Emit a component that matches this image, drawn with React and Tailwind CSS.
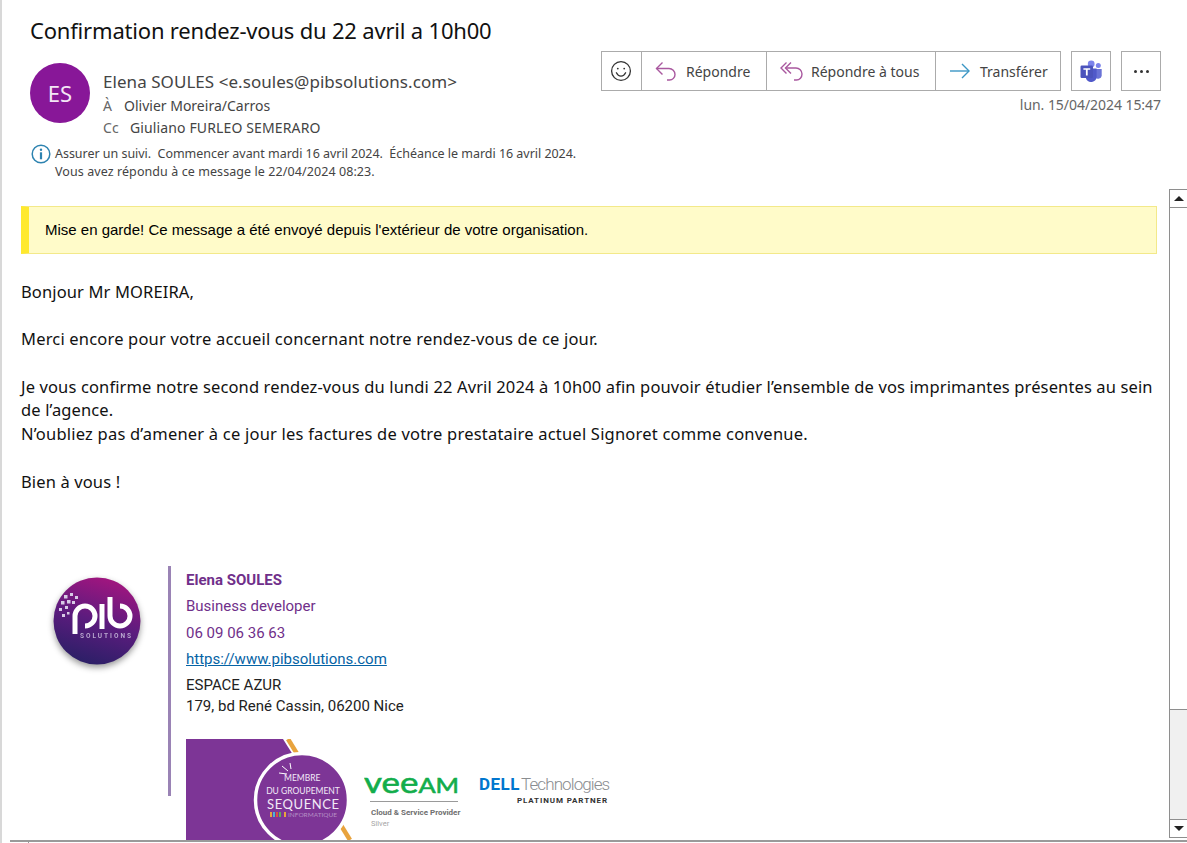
import React from "react";

const SmileIcon = () => (
  <svg width="22" height="22" viewBox="0 0 22 22" fill="none" stroke="#333" strokeWidth="1.3">
    <circle cx="11" cy="11" r="9.4" />
    <circle cx="7.8" cy="8.6" r="0.9" fill="#333" stroke="none" />
    <circle cx="14.2" cy="8.6" r="0.9" fill="#333" stroke="none" />
    <path d="M6.4 12.8c1 2.2 2.7 3.3 4.6 3.3s3.6-1.1 4.600-3.3" strokeLinecap="round" />
  </svg>
);

const ReplyIcon = () => (
  <svg width="22" height="22" viewBox="0 0 22 22" fill="none" stroke="#a9589f" strokeWidth="1.4">
    <path d="M7.5 2.500 1.500 8.500l6 6" />
    <path d="M1.500 8.500H14a6 6 0 0 1 6 6c0 3-2.300 5.500-5.500 5.500H12" />
  </svg>
);

const ReplyAllIcon = () => (
  <svg width="24" height="22" viewBox="0 0 24 22" fill="none" stroke="#a9589f" strokeWidth="1.4">
    <path d="M6.500 2.500 1 8l5.500 5.500" />
    <path d="M11 2.500 5.500 8l5.500 5.500" />
    <path d="M5.500 8H16a6 6 0 0 1 6 6c0 3.200-2.300 6-5.500 6H14" />
  </svg>
);

const ForwardIcon = () => (
  <svg width="22" height="18" viewBox="0 0 22 18" fill="none" stroke="#3a96c4" strokeWidth="1.4">
    <path d="M1 9h19" />
    <path d="M13 2l7 7-7 7" />
  </svg>
);

const TeamsIcon = () => (
  <svg width="24" height="24" viewBox="0 0 24 24">
    <circle cx="19.300" cy="6.600" r="2.500" fill="#7b83eb" />
    <path d="M15.500 10h7.200v6.200a3.700 3.700 0 0 1-7.200 1z" fill="#6a73d6" />
    <circle cx="12.200" cy="5" r="3.400" fill="#7b83eb" />
    <path d="M7 9.500h10.600v8.300a5.500 5.500 0 0 1-10.600 1.700z" fill="#5059c9" />
    <rect x="1.500" y="6.500" width="12.500" height="12.500" rx="1.200" fill="#4b53bc" />
    <path d="M4.400 9.300h6.800v1.500H8.700v5.600H6.900v-5.600H4.400z" fill="#fff" />
  </svg>
);

const PibLogo = () => (
  <svg width="96" height="100" viewBox="0 0 96 100" className="drop-shadow-[0_3px_3px_rgba(0,0,0,0.4)]">
    <defs>
      <linearGradient id="pibBg" x1="0.65" y1="0" x2="0.35" y2="1">
        <stop offset="0" stopColor="#a3157f" />
        <stop offset="0.5" stopColor="#5c1c7e" />
        <stop offset="1" stopColor="#2a1f66" />
      </linearGradient>
    </defs>
    <circle cx="47" cy="50" r="43.500" fill="url(#pibBg)" />
    <path d="M25 63V45a10 10 0 1 1 10 10" fill="none" stroke="#fff" strokeWidth="5" />
    <path d="M52 33v25" stroke="#fff" strokeWidth="5" />
    <path d="M60 26V45a10 10 0 1 0 10-10" fill="none" stroke="#fff" strokeWidth="5" />
    <g fill="#d8cbe6">
      <rect x="14" y="24" width="3.500" height="3.500" />
      <rect x="20" y="22" width="3" height="3" />
      <rect x="25" y="25" width="3" height="3" />
      <rect x="11" y="30" width="3.500" height="3.500" />
      <rect x="17" y="29" width="3.500" height="3.500" />
      <rect x="22" y="30" width="3" height="3" />
      <rect x="9" y="37" width="3" height="3" />
      <rect x="15" y="35" width="3" height="3" />
      <rect x="12" y="43" width="3" height="3" />
      <rect x="17" y="41" width="2.500" height="2.500" />
    </g>
    <text x="30" y="67" fill="#b9a7cf" fontFamily="Roboto, sans-serif" fontSize="6.500" fontWeight="700" textLength="51">
      SOLUTIONS
    </text>
  </svg>
);

const SequenceBadge = () => (
  <svg width="176" height="101" viewBox="0 0 176 101">
    <path d="M102 0l62 101" stroke="#e8a33d" strokeWidth="4.500" fill="none" />
    <path d="M0 0h97l39 62-30 39H0z" fill="#7d3596" />
    <circle cx="116" cy="61" r="46.500" fill="#7d3596" stroke="#fff" strokeWidth="3.500" />
    <path d="M93 34l8 1M96 27l6 5M104 24l1 6" stroke="#fff" strokeWidth="1" fill="none" />
    <text x="98" y="42" fill="#f2e9f6" fontFamily="Lato, sans-serif" fontSize="8.500">MEMBRE</text>
    <text x="117" y="55" textAnchor="middle" fill="#f2e9f6" fontFamily="Lato, sans-serif" fontSize="8.500">DU GROUPEMENT</text>
    <text x="81" y="70" fill="#f2e9f6" fontFamily="Lato, sans-serif" fontSize="13" textLength="72">SEQUENCE</text>
    <g>
      <rect x="84" y="73" width="2" height="5" fill="#e8a33d" />
      <rect x="87" y="73" width="2" height="5" fill="#4bb3d3" />
      <rect x="90" y="73" width="2" height="5" fill="#d8503f" />
      <rect x="93" y="73" width="2" height="5" fill="#5fb05a" />
      <rect x="98" y="73" width="2" height="5" fill="#e8a33d" />
    </g>
    <text x="102" y="78" fill="#b58fc5" fontFamily="Lato, sans-serif" fontSize="6.500">INFORMATIQUE</text>
  </svg>
);

const VeeamLogo = () => (
  <div className="flex w-[96px] flex-col">
    <svg width="96" height="34" viewBox="0 0 96 34">
      <text x="0" y="29" fill="#12ad4b" stroke="#12ad4b" strokeWidth="0.6" fontFamily="Lato, sans-serif" textLength="95" lengthAdjust="spacingAndGlyphs">
        <tspan fontSize="29">vee</tspan>
        <tspan fontSize="21">AM</tspan>
      </text>
    </svg>
    <div className="ml-[6px] mt-[3px] h-px w-[88px] bg-[#9a9a9a]" />
    <div className="ml-[7px] mt-[5px] whitespace-nowrap text-[8px] font-bold leading-[11px] text-[#6f6f6f]">Cloud &amp; Service Provider</div>
    <div className="ml-[7px] text-[7.5px] leading-[11px] text-[#a5a5a5]">Silver</div>
  </div>
);

const DellLogo = () => (
  <div className="flex w-[130px] flex-col">
    <div className="flex items-baseline">
      <span className="text-[17px] font-bold leading-[22px] tracking-[0.5px] text-[#0076ce]">DELL</span>
      <span className="ml-[1px] whitespace-nowrap text-[17px] font-light leading-[22px] tracking-[-0.9px] text-[#8a8d90]">Technologies</span>
    </div>
    <div className="mr-[1px] text-right text-[8px] font-bold leading-[12px] tracking-[0.9px] text-[#333]">PLATINUM PARTNER</div>
  </div>
);

const ToolButton = ({ icon, label, className }) => (
  <div className={`flex h-full items-center ${className}`}>
    {icon}
    <span className="text-[14px] text-[#444]">{label}</span>
  </div>
);

const Scrollbar = () => (
  <div className="flex h-[649px] w-[18px] flex-none flex-col border-l border-[#8e8e8e] bg-[#f0f0f0]">
    <div className="flex h-[19px] flex-none items-center justify-center border-y border-[#8e8e8e] bg-white">
      <div className="h-0 w-0 border-x-[5px] border-b-[5px] border-x-transparent border-b-[#222]" />
    </div>
    <div className="h-[502px] flex-none border-b border-[#8e8e8e] bg-white" />
    <div className="flex-1" />
    <div className="flex h-[19px] flex-none items-center justify-center border-y border-[#8e8e8e] bg-white">
      <div className="h-0 w-0 border-x-[5px] border-t-[5px] border-x-transparent border-t-[#222]" />
    </div>
  </div>
);

export default function App() {
  return (
    <div className="flex h-[843px] w-[1187px] flex-col overflow-hidden border-l-2 border-[#d8d8d8] bg-white font-['Noto_Sans',sans-serif] text-black">
      {/* message header */}
      <div className="h-[189px] flex-none">
        <h1 className="pl-[28px] pt-[14px] text-[22px] font-normal leading-[32px] tracking-[-0.19px] text-[#111]">
          Confirmation rendez-vous du 22 avril a 10h00
        </h1>
        <div className="mt-[5px] flex justify-between pl-[28px] pr-[26px]">
          <div>
            <div className="flex">
              <div className="mt-[12px] flex h-[60px] w-[60px] flex-none items-center justify-center rounded-full bg-[#881798] text-[22px] text-[#f3e6f5]">
                ES
              </div>
              <div className="ml-[13px] mt-[19px]">
                <div className="text-[17px] leading-[24px] tracking-[0.05px] text-[#444]">Elena SOULES &lt;e.soules@pibsolutions.com&gt;</div>
                <div className="mt-[1px] flex text-[14px] leading-[22px] text-[#444]">
                  <span className="w-[21px] text-[#666]">À</span>
                  <span>Olivier Moreira/Carros</span>
                </div>
                <div className="flex text-[14px] leading-[22px] tracking-[0.13px] text-[#444]">
                  <span className="w-[27px] text-[#666]">Cc</span>
                  <span>Giuliano FURLEO SEMERARO</span>
                </div>
              </div>
            </div>
            <div className="mt-[6px] flex pl-[1px]">
              <svg width="20" height="20" viewBox="0 0 20 20" className="mt-[-1px] flex-none">
                <circle cx="10" cy="10" r="8.800" fill="none" stroke="#2d83b0" strokeWidth="1.500" />
                <circle cx="10" cy="5.800" r="1.200" fill="#2d83b0" />
                <rect x="8.900" y="8.300" width="2.200" height="7" fill="#2d83b0" />
              </svg>
              <div className="ml-[4px] text-[12.5px] leading-[18px] text-[#444]">
                <div className="whitespace-pre tracking-[-0.03px]">Assurer un suivi.  Commencer avant mardi 16 avril 2024.  Échéance le mardi 16 avril 2024.</div>
                <div className="tracking-[0.08px]">Vous avez répondu à ce message le 22/04/2024 08:23.</div>
              </div>
            </div>
          </div>
          <div className="flex flex-col items-end">
            <div className="flex h-[40px]">
              <div className="flex h-full divide-x divide-[#ababab] border border-[#ababab]">
                <div className="flex h-full w-[40px] items-center justify-center pr-[2px]">
                  <SmileIcon />
                </div>
                <ToolButton icon={<ReplyIcon />} label="Répondre" className="w-[125px] gap-[9px] pl-[13px]" />
                <ToolButton icon={<ReplyAllIcon />} label="Répondre à tous" className="w-[169px] gap-[7px] pl-[13px]" />
                <ToolButton icon={<ForwardIcon />} label="Transférer" className="w-[124px] gap-[9px] pl-[13px]" />
              </div>
              <div className="ml-[10px] flex h-full w-[40px] items-center justify-center border border-[#ababab]">
                <TeamsIcon />
              </div>
              <div className="ml-[10px] flex h-full w-[40px] items-center justify-center gap-[3px] border border-[#ababab]">
                <span className="h-[3px] w-[3px] rounded-full bg-[#333]" />
                <span className="h-[3px] w-[3px] rounded-full bg-[#333]" />
                <span className="h-[3px] w-[3px] rounded-full bg-[#333]" />
              </div>
            </div>
            <div className="mt-[4px] text-[14px] leading-[20px] tracking-[-0.05px] text-[#666]">lun. 15/04/2024 15:47</div>
          </div>
        </div>
      </div>

      {/* message body + scrollbar */}
      <div className="flex h-[651px] flex-none justify-between overflow-hidden">
        <div className="w-[1155px] flex-none pl-[19px] pt-[17px]">
          <div className="flex h-[48px] items-center border border-[#f3e98a] border-l-[8px] border-l-[#ffe92e] bg-[#fffbc9] pl-[16px] font-['Liberation_Sans',sans-serif] text-[15px] text-black">
            Mise en garde! Ce message a été envoyé depuis l'extérieur de votre organisation.
          </div>
          <div className="mt-[26px] text-[16.5px] leading-[23.7px] tracking-[0.13px] text-[#111]">
            <p>Bonjour Mr MOREIRA,</p>
            <p className="mt-[23.7px] tracking-[0.185px]">Merci encore pour votre accueil concernant notre rendez-vous de ce jour.</p>
            <p className="mt-[23.7px]">
              Je vous confirme notre second rendez-vous du lundi 22 Avril 2024 à 10h00 afin pouvoir étudier l’ensemble de vos imprimantes présentes au sein de l’agence.
            </p>
            <p className="tracking-[0.21px]">N’oubliez pas d’amener à ce jour les factures de votre prestataire actuel Signoret comme convenue.</p>
            <p className="mt-[23.7px]">Bien à vous !</p>
          </div>

          {/* signature */}
          <div className="mt-[73px] flex font-['Roboto',sans-serif] text-[15px]">
            <div className="ml-[29px] mt-[5px] h-[100px] w-[96px] flex-none">
              <PibLogo />
            </div>
            <div className="ml-[22px] h-[230px] w-[3px] flex-none bg-[#9a83b5]" />
            <div className="ml-[15px] pt-px">
              <div className="font-bold leading-[26px] text-[#702f8a]">Elena SOULES</div>
              <div className="leading-[26.500px] text-[#702f8a]">Business developer</div>
              <div className="leading-[26.500px] text-[#702f8a]">06 09 06 36 63</div>
              <div className="leading-[26.500px] text-[#0563a5] underline">https://www.pibsolutions.com</div>
              <div className="mt-[2px] leading-[21px] text-[#222]">ESPACE AZUR</div>
              <div className="leading-[21px] text-[#222]">179, bd René Cassin, 06200 Nice</div>
              <div className="mt-[22px] flex">
                <SequenceBadge />
                <div className="ml-[2px] mt-[25px]">
                  <VeeamLogo />
                </div>
                <div className="ml-[19px] mt-[34px]">
                  <DellLogo />
                </div>
              </div>
            </div>
          </div>
        </div>
        <Scrollbar />
      </div>

      <div className="ml-[8px] flex h-[3px] flex-none border-t-2 border-[#9a9a9a]">
        <div className="ml-[18px] h-[3px] w-px bg-[#9a9a9a]" />
      </div>
    </div>
  );
}
